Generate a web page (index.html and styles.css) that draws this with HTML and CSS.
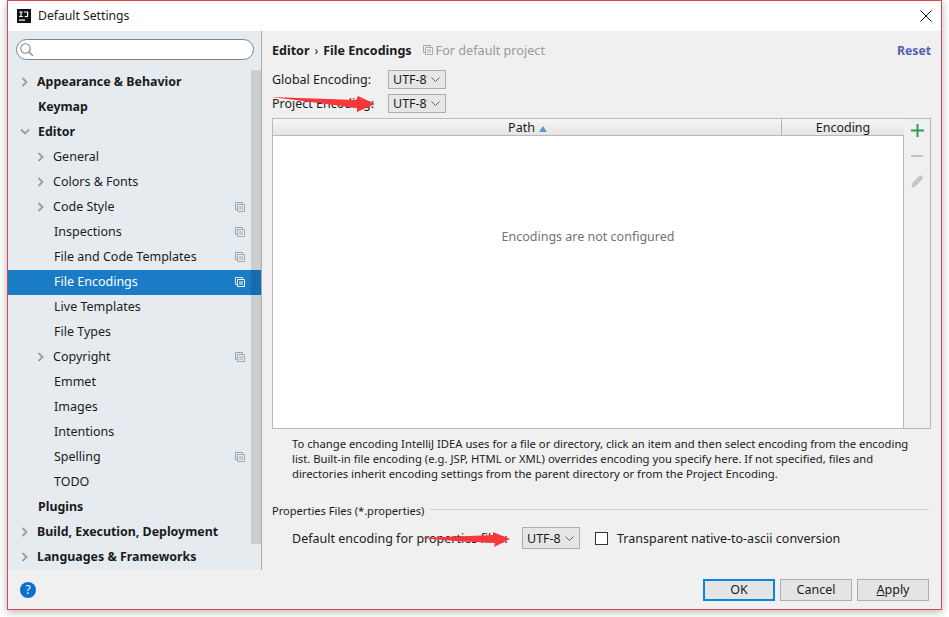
FILE: index.html
```html
<!DOCTYPE html>
<html lang="en">
<head>
<meta charset="utf-8">
<title>Default Settings</title>
<link rel="stylesheet" href="styles.css">
</head>
<body>
<div class="dialog">
  <header class="titlebar">
    <svg class="logo" width="14" height="14" viewBox="0 0 14 14"><rect width="14" height="14" fill="#111"/><rect x="2" y="10.5" width="6" height="1.2" fill="#fff"/><path d="M2.2 2.5h3.6v1H4.6v3.6h1.2v1H2.2v-1h1.2V3.500H2.200zM7 2.500h4.200v4.200c0 1-.7 1.500-1.900 1.500-.9 0-1.500-.3-1.900-.8l.7-.7c.3.300.7.500 1.100.500.500 0 .8-.2.800-.7V3.500H7z" fill="#fff"/></svg>
    <span class="title">Default Settings</span>
    <svg class="close" width="12" height="12" viewBox="0 0 12 12"><path d="M.5.500l11 11M11.500.500l-11 11" stroke="#111" stroke-width="1" fill="none"/></svg>
  </header>
  <div class="content">
    <aside class="sidebar">
      <div class="search">
        <svg width="15" height="15" viewBox="0 0 15 15"><circle cx="6.500" cy="6.500" r="4.700" fill="none" stroke="#888" stroke-width="1.100"/><path d="M10 10l4 4" stroke="#888" stroke-width="1.300"/></svg>
      </div>
      <ul class="tree">
        <li class="row top"><svg class="chev" viewBox="0 0 8 10"><path d="M1.500 1l4 4-4 4" /></svg><span class="lbl bold b1">Appearance &amp; Behavior</span></li>
        <li class="row top"><span class="lbl bold b2">Keymap</span></li>
        <li class="row top"><svg class="chev down" viewBox="0 0 10 8"><path d="M1 1.500l4 4 4-4" /></svg><span class="lbl bold b2 b3">Editor</span></li>
        <li class="row sub"><svg class="chev" viewBox="0 0 8 10"><path d="M1.500 1l4 4-4 4" /></svg><span class="lbl">General</span></li>
        <li class="row sub"><svg class="chev" viewBox="0 0 8 10"><path d="M1.500 1l4 4-4 4" /></svg><span class="lbl">Colors &amp; Fonts</span></li>
        <li class="row sub"><svg class="chev" viewBox="0 0 8 10"><path d="M1.500 1l4 4-4 4" /></svg><span class="lbl">Code Style</span><svg class="copy" viewBox="0 0 10 10"><path d="M2.500 7.500H.5v-7h7v2" fill="none" stroke="#7fa9c9"/><path d="M2.500 2.500h7v7h-7zM4 5h4M4 7h4" fill="none" stroke="#a5a9ad"/></svg></li>
        <li class="row leaf"><span class="lbl">Inspections</span><svg class="copy" viewBox="0 0 10 10"><path d="M2.500 7.500H.5v-7h7v2" fill="none" stroke="#7fa9c9"/><path d="M2.500 2.500h7v7h-7zM4 5h4M4 7h4" fill="none" stroke="#a5a9ad"/></svg></li>
        <li class="row leaf"><span class="lbl">File and Code Templates</span><svg class="copy" viewBox="0 0 10 10"><path d="M2.500 7.500H.5v-7h7v2" fill="none" stroke="#7fa9c9"/><path d="M2.500 2.500h7v7h-7zM4 5h4M4 7h4" fill="none" stroke="#a5a9ad"/></svg></li>
        <li class="row leaf selected"><span class="lbl">File Encodings</span><svg class="copy" viewBox="0 0 10 10"><path d="M2.500 7.500H.5v-7h7v2" fill="none" stroke="#d5e8f7"/><path d="M2.500 2.500h7v7h-7zM4 5h4M4 7h4" fill="none" stroke="#fff"/></svg></li>
        <li class="row leaf"><span class="lbl">Live Templates</span></li>
        <li class="row leaf"><span class="lbl">File Types</span></li>
        <li class="row sub"><svg class="chev" viewBox="0 0 8 10"><path d="M1.500 1l4 4-4 4" /></svg><span class="lbl">Copyright</span><svg class="copy" viewBox="0 0 10 10"><path d="M2.500 7.500H.5v-7h7v2" fill="none" stroke="#7fa9c9"/><path d="M2.500 2.500h7v7h-7zM4 5h4M4 7h4" fill="none" stroke="#a5a9ad"/></svg></li>
        <li class="row leaf"><span class="lbl">Emmet</span></li>
        <li class="row leaf"><span class="lbl">Images</span></li>
        <li class="row leaf"><span class="lbl">Intentions</span></li>
        <li class="row leaf"><span class="lbl">Spelling</span><svg class="copy" viewBox="0 0 10 10"><path d="M2.500 7.500H.5v-7h7v2" fill="none" stroke="#7fa9c9"/><path d="M2.500 2.500h7v7h-7zM4 5h4M4 7h4" fill="none" stroke="#a5a9ad"/></svg></li>
        <li class="row leaf"><span class="lbl">TODO</span></li>
        <li class="row top"><span class="lbl bold b2">Plugins</span></li>
        <li class="row top"><svg class="chev" viewBox="0 0 8 10"><path d="M1.500 1l4 4-4 4" /></svg><span class="lbl bold b1">Build, Execution, Deployment</span></li>
        <li class="row top"><svg class="chev" viewBox="0 0 8 10"><path d="M1.500 1l4 4-4 4" /></svg><span class="lbl bold b1">Languages &amp; Frameworks</span></li>
      </ul>
      <div class="scrollthumb"></div>
    </aside>
    <main class="main">
      <div class="crumbs">
        <strong>Editor</strong><span class="sep">›</span><strong>File Encodings</strong>
        <svg class="copy crumbicon" viewBox="0 0 10 10"><path d="M2.500 7.500H.5v-7h7v2" fill="none" stroke="#9aa9b5"/><path d="M2.500 2.500h7v7h-7zM4 5h4M4 7h4" fill="none" stroke="#a9adb1"/></svg>
        <span class="scope">For default project</span>
        <a class="reset">Reset</a>
      </div>
      <div class="enc-row"><label>Global Encoding:</label><div class="combo">UTF-8<svg viewBox="0 0 9 5"><path d="M.5.500l4 4 4-4"/></svg></div></div>
      <div class="enc-row second"><label>Project Encoding:</label><div class="combo">UTF-8<svg viewBox="0 0 9 5"><path d="M.5.500l4 4 4-4"/></svg></div></div>
      <div class="table">
        <div class="table-main">
          <div class="thead">
            <div class="th path">Path<svg width="8" height="6" viewBox="0 0 8 6"><path d="M4 0l4 6H0z" fill="#5b9bc9"/></svg></div>
            <div class="th encoding">Encoding</div>
          </div>
          <div class="tbody"><span class="empty">Encodings are not configured</span></div>
        </div>
        <div class="toolbar">
          <svg width="13" height="13" viewBox="0 0 13 13"><path d="M5.500 0h2v5.500H13v2H7.500V13h-2V7.500H0v-2h5.500z" fill="#2f9e4f"/></svg>
          <svg width="12" height="12" viewBox="0 0 12 12"><path d="M0 5h12v2H0z" fill="#c4c4c4"/></svg>
          <svg width="12" height="13" viewBox="0 0 12 13"><path d="M9 0l3 2-1 2.500-6 6.500-4.500 2L1.500 8z" fill="#c4c4c4"/></svg>
        </div>
      </div>
      <p class="help">To change encoding IntelliJ IDEA uses for a file or directory, click an item and then select encoding from the encoding list. Built-in file encoding (e.g. JSP, HTML or XML) overrides encoding you specify here. If not specified, files and directories inherit encoding settings from the parent directory or from the Project Encoding.</p>
      <div class="group-title"><span>Properties Files (*.properties)</span><i></i></div>
      <div class="props">
        <label class="default-label">Default encoding for properties files:</label>
        <div class="combo">UTF-8<svg viewBox="0 0 9 5"><path d="M.5.500l4 4 4-4"/></svg></div>
        <span class="checkbox"></span>
        <label class="native">Transparent native-to-ascii conversion</label>
      </div>
    </main>
  </div>
  <footer class="footer">
    <span class="helpbtn">?</span>
    <div class="buttons">
      <button class="btn default">OK</button>
      <button class="btn">Cancel</button>
      <button class="btn"><u>A</u>pply</button>
    </div>
  </footer>
  <svg class="arrow a1" width="106" height="18" viewBox="0 0 106 18"><path d="M0 1l85 3 2-4 17 8-18 8 0-4-46-6z" fill="#f8373a"/></svg>
  <svg class="arrow a2" width="92" height="17" viewBox="0 0 92 17"><path d="M0 7l73-3 0-3 17 7-16 8 1-4-40-2z" fill="#f8373a"/></svg>
</div>
</body>
</html>
```
FILE: styles.css
```css
* { box-sizing: border-box; }
html, body { margin: 0; padding: 0; background: #fff; }
body { width: 949px; height: 617px; overflow: hidden; font-family: "Noto Sans", "Open Sans", sans-serif; font-size: 13px; color: #1b1b1b; }
.dialog { position: relative; margin-left: 7px; width: 935px; height: 610px; background: #f0f0f0; border: 1px solid #d04a50; box-shadow: 0 2px 8px rgba(0,0,0,.3); display: flex; flex-direction: column; }
.titlebar { height: 30px; background: #fff; display: flex; align-items: center; padding: 0 9px 0 9px; flex: none; }
.logo { margin-right: 7px; }
.title { font-size: 12.200px; flex: 1; margin-top: -2px; }
.close { display: block; }
.content { display: flex; height: 539px; flex: none; }
.sidebar { position: relative; width: 254px; background: #e6ebf0; border-right: 1px solid #a9adb0; padding-top: 8px; flex: none; overflow: hidden; }
.search { width: 238px; height: 21px; margin-left: 8px; background: #fff; border: 1px solid #7f8387; border-radius: 11px; display: flex; align-items: center; padding-left: 2px; }
.tree { list-style: none; margin: 10px 0 0; padding: 0; }
.row { height: 25px; display: flex; align-items: center; position: relative; white-space: nowrap; padding-bottom: 2px; }
.lbl { font-size: 12.500px; }
.bold { font-weight: 700; font-size: 12.400px; }
.top .chev { position: absolute; left: 13px; top: 7px; }
.sub .chev { position: absolute; left: 29px; top: 7px; }
.chev { width: 8px; height: 10px; fill: none; stroke: #9b9ea1; stroke-width: 1.800; }
.top .chev.down { width: 10px; height: 8px; left: 12px; top: 8px; }
.top .lbl { padding-left: 29px; }
.top .b2 { padding-left: 30px; }
.sub .lbl { padding-left: 45px; }
.leaf .lbl { padding-left: 46px; }
.copy { width: 10px; height: 10px; position: absolute; left: 227px; top: 7px; }
.selected { background: #1a7bc6; color: #fff; }
.scrollthumb { position: absolute; right: 0; top: 39px; width: 10px; height: 474px; background: rgba(0,0,0,.12); }
.main { flex: 1; padding: 0 10px; min-width: 0; }
.crumbs { display: flex; align-items: center; height: 20px; margin-top: 9px; font-size: 12.650px; }
.crumbs strong { font-weight: 700; font-size: 12.500px; }
.sep { margin: 0 5px; font-size: 12px; }
.crumbicon { position: static; margin-left: 11px; }
.scope { color: #9b9b9b; margin-left: 3px; flex: 1; }
.reset { color: #5264a8; font-weight: 700; font-size: 12.200px; }
.enc-row { display: flex; align-items: center; height: 19px; margin-top: 10px; }
.enc-row.second { margin-top: 5px; }
.enc-row label { width: 116px; font-size: 12.500px; }
.combo { width: 58px; height: 19px; background: #e6e6e6; border: 1px solid #adadad; display: flex; align-items: center; justify-content: space-between; padding: 0 5px 0 4px; font-size: 12.500px; flex: none; }
.combo svg { width: 9px; height: 5px; fill: none; stroke: #666; }
.table { display: flex; width: 659px; height: 311px; margin-top: 5px; border: 1px solid #b9b9b9; }
.table-main { flex: 1; display: flex; flex-direction: column; }
.thead { height: 17px; display: flex; background: linear-gradient(#f6f6f6, #e4e4e4); border-bottom: 1px solid #b9b9b9; flex: none; }
.th { font-size: 12.500px; line-height: 18px; text-align: center; color: #1b1b1b; }
.th.path { width: 509px; border-right: 1px solid #b4b4b4; padding-left: 1px; }
.th.path svg { margin-left: 4px; }
.th.encoding { flex: 1; }
.tbody { flex: 1; background: #fff; display: flex; justify-content: center; padding-top: 92px; border-right: 1px solid #b9b9b9; }
.empty { color: #737373; font-size: 12.500px; height: 18px; }
.toolbar { width: 26px; display: flex; flex-direction: column; align-items: center; gap: 13px; padding-top: 5px; }
.help { margin: 7px 0 0 20px; width: 630px; font-size: 11.260px; line-height: 15px; }
.group-title { display: flex; align-items: center; margin-top: 20px; height: 18px; font-size: 11.100px; gap: 6px; width: 657px; }
.group-title i { flex: 1; height: 1px; background: #cfcfcf; position: relative; top: -1px; }
.props { display: flex; align-items: center; margin: 8px 0 0 20px; height: 22px; }
.default-label { width: 230px; font-size: 12.500px; }
.props .combo { height: 22px; }
.checkbox { width: 13px; height: 13px; border: 1px solid #333; background: #fff; margin: 0 9px 0 15px; }
.native { font-size: 12.500px; }
.footer { flex: 1; display: flex; align-items: center; justify-content: space-between; padding: 0 12px 0 12px; }
.helpbtn { width: 16px; height: 16px; border-radius: 50%; background: #0c6fd0; color: #fff; font-size: 12px; line-height: 16px; text-align: center; }
.buttons { display: flex; gap: 5px; }
.btn { width: 72px; height: 22px; padding: 0; background: #e4e4e4; border: 1px solid #adadad; font: 12.500px "Noto Sans", sans-serif; color: #1b1b1b; }
.btn.default { border: 2px solid #0a84dc; }
.arrow { position: absolute; }
.a1 { left: 263px; top: 95px; }
.a2 { left: 412px; top: 530px; }
```
